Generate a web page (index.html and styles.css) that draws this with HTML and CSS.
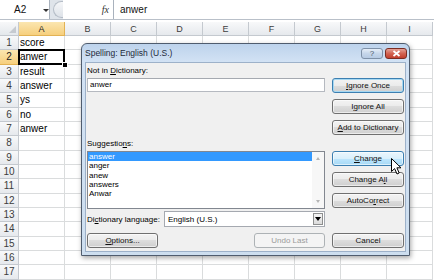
FILE: index.html
```html
<!DOCTYPE html>
<html lang="en">
<head>
  <meta charset="UTF-8" />
  <meta name="viewport" content="width=device-width, initial-scale=1.0"/>
  <title>Spelling: English (U.S.)</title>
  <link rel="stylesheet" href="styles.css">
</head>
<body>
  <!-- Formula bar -->
  <div class="formula-bar">
    <div class="name-box">A2<span class="name-caret"></span></div>
    <div class="grip"></div>
    <div class="fx-box"><span class="fx">fx</span></div>
    <div class="formula">anwer</div>
  </div>

  <!-- Sheet grid, filled by the script below -->
  <div class="sheet" id="sheet"></div>

  <!-- Spelling dialog -->
  <div class="dialog">
    <div class="title-bar">
      <span class="title">Spelling: English (U.S.)</span>
      <span class="tb-btn tb-help">?</span>
      <span class="tb-btn tb-close">
        <svg width="9" height="7" viewBox="0 0 9 7"><path d="M1.5 1 L7.5 6 M7.5 1 L1.5 6" stroke="#fff" stroke-width="1.8"/></svg>
      </span>
    </div>

    <div class="dialog-body">
      <div class="left-col">
        <div class="label first">Not in <u>D</u>ictionary:</div>
        <div class="textbox">anwer</div>

        <div class="label suggest">Suggestio<u>n</u>s:</div>
        <div class="listbox">
          <ul class="items">
            <li class="selected">answer</li>
            <li>anger</li>
            <li>anew</li>
            <li>answers</li>
            <li>Anwar</li>
          </ul>
          <div class="scrollbar">
            <span class="arrow-up"></span>
            <span class="arrow-down"></span>
          </div>
        </div>

        <div class="lang-row">
          <span class="lang-label">Di<u>c</u>tionary language:</span>
          <div class="select">
            <span>English (U.S.)</span>
            <span class="select-btn"><span class="arrow-down dark"></span></span>
          </div>
        </div>

        <div class="bottom-row">
          <div class="btn small"><u>O</u>ptions...</div>
          <div class="btn small disabled">Undo Last</div>
        </div>
      </div>

      <div class="right-col">
        <div class="btn default b-once"><u>I</u>gnore Once</div>
        <div class="btn b-gap">I<u>g</u>nore All</div>
        <div class="btn b-gap"><u>A</u>dd to Dictionary</div>
        <div class="btn hot b-change"><u>C</u>hange</div>
        <div class="btn b-gap">Change A<u>l</u>l</div>
        <div class="btn b-gap">AutoCo<u>r</u>rect</div>
        <div class="btn b-cancel">Cancel</div>
      </div>
    </div>
  </div>

  <svg class="cursor" width="12" height="18" viewBox="0 0 12 18">
    <path d="M0.5 0.5 V13.5 L3.6 10.6 L6 16 L8.2 15 L5.9 9.8 H10 Z" fill="#fff" stroke="#000" stroke-width="1" stroke-linejoin="round"/>
  </svg>

  <script>
    const cols = ['A', 'B', 'C', 'D', 'E', 'F', 'G', 'H', 'I'];
    const values = ['score', 'anwer', 'result', 'answer', 'ys', 'no', 'anwer'];
    const sheet = document.getElementById('sheet');

    function addCell(cls, text) {
      const div = document.createElement('div');
      div.className = cls;
      if (text) div.textContent = text;
      sheet.appendChild(div);
    }

    // Column headers
    addCell('corner');
    cols.forEach(c => addCell(c === 'A' ? 'col-head sel' : 'col-head', c));

    // Rows
    for (let r = 1; r <= 17; r++) {
      addCell(r === 2 ? 'row-head sel' : 'row-head', String(r));
      cols.forEach(c => {
        const text = c === 'A' ? values[r - 1] : '';
        addCell(c === 'A' && r === 2 ? 'cell active' : 'cell', text);
      });
    }
  </script>
</body>
</html>
```

FILE: styles.css
```css
body {
  margin: 0;
  width: 434px;
  height: 280px;
  overflow: hidden;
  position: relative;
  background: #fff;
  font-family: 'Liberation Sans', Arial, sans-serif;
}

/* Formula bar */
.formula-bar {
  height: 19px;
  display: flex;
  background: #dfe4ea;
  border-bottom: 1px solid #b9c0c9;
  margin-bottom: 2px;
}

.name-box {
  width: 50px;
  background: #fff;
  border-right: 1px solid #a9b2bd;
  font-size: 10px;
  line-height: 19px;
  padding-left: 14px;
  box-sizing: border-box;
  position: relative;
  color: #111;
}

.name-caret {
  position: absolute;
  left: 43px;
  top: 9px;
  border-left: 3px solid transparent;
  border-right: 3px solid transparent;
  border-top: 3px solid #333;
}

.grip {
  width: 9px;
  margin: 1px 0 1px 3px;
  background: linear-gradient(#f6f7f9, #dde2e8);
  border: 1px solid #b5bdc7;
  border-right: none;
  border-radius: 9px 0 0 9px;
}

.fx-box {
  width: 50px;
  background: #fff;
  display: flex;
  justify-content: flex-end;
  align-items: center;
  padding-right: 4px;
  box-sizing: border-box;
}

.fx {
  font-family: 'Liberation Serif', serif;
  font-style: italic;
  font-size: 10px;
  color: #333;
}

.formula {
  flex: 1;
  background: #fff;
  border-left: 1px solid #a9b2bd;
  font-size: 10px;
  line-height: 19px;
  padding-left: 6px;
  color: #111;
}

/* Sheet */
.sheet {
  display: grid;
  grid-template-columns: 19px repeat(9, 46px);
  grid-template-rows: 14px;
  grid-auto-rows: 14.34px;
}

.sheet > div {
  box-sizing: border-box;
  border-right: 1px solid #dadcdd;
  border-bottom: 1px solid #dadcdd;
}

.corner {
  background: linear-gradient(#f7f8f9, #e4e8ec);
  position: relative;
}

.corner::after {
  content: '';
  position: absolute;
  right: 2px;
  bottom: 2px;
  border-left: 7px solid transparent;
  border-bottom: 7px solid #c5cad0;
}

.col-head,
.row-head {
  background: linear-gradient(#f8f9fa, #e6e9ed);
  color: #3d3d3d;
  text-align: center;
}

.sheet > .col-head,
.sheet > .row-head,
.sheet > .corner {
  border-color: #c4c9cf;
}

.col-head {
  font-size: 9px;
  line-height: 14px;
}

.row-head {
  font-size: 10px;
  line-height: 14px;
}

.sel {
  background: linear-gradient(#fbe6b0, #f6cf7d);
  color: #222;
}

.sheet > .sel {
  border-color: #e2b254;
}

.cell {
  font-size: 10px;
  line-height: 14px;
  padding-left: 1px;
  color: #000;
}

.active {
  position: relative;
}

.active::before {
  content: '';
  position: absolute;
  left: -1px;
  top: -1px;
  right: -1px;
  bottom: -1px;
  border: 2px solid #000;
}

.active::after {
  content: '';
  position: absolute;
  right: -4px;
  bottom: -4px;
  width: 4px;
  height: 4px;
  background: #000;
  border: 1px solid #fff;
}

/* Dialog */
.dialog {
  position: absolute;
  left: 81px;
  top: 43px;
  width: 329px;
  height: 213px;
  box-sizing: border-box;
  border: 1px solid #4f5c6e;
  border-radius: 6px 6px 0 0;
  background: linear-gradient(#bdd3ec, #d2e2f4 18px, #cddeef);
  display: flex;
  flex-direction: column;
  font-size: 8px;
  color: #000;
  box-shadow: 1px 2px 5px rgba(0, 0, 0, 0.35);
}

.title-bar {
  height: 18px;
  display: flex;
  align-items: center;
  padding: 0 2px 0 3px;
}

.title {
  font-size: 8.5px;
  color: #1e2a3a;
}

.tb-btn {
  height: 11px;
  width: 22px;
  box-sizing: border-box;
  border-radius: 3px;
  display: flex;
  align-items: center;
  justify-content: center;
}

.tb-help {
  margin-left: auto;
  background: linear-gradient(#e6eef8, #c6d6ea 50%, #b7cbe3);
  border: 1px solid #7f91a8;
  color: #4a5668;
  font-size: 8px;
}

.tb-close {
  margin-left: 2px;
  background: linear-gradient(#e5a196, #d26352 50%, #c23f2d);
  border: 1px solid #7b2c22;
}

.dialog-body {
  flex: 1;
  margin: 0 3px 3px;
  background: #f0f0f0;
  border: 1px solid #9db1c9;
  display: flex;
  gap: 7px;
  padding-left: 1px;
}

.left-col {
  width: 238px;
  display: flex;
  flex-direction: column;
}

.right-col {
  width: 72px;
  display: flex;
  flex-direction: column;
}

.label {
  line-height: 10px;
  height: 10px;
}

.label.first {
  margin-top: 3px;
}

.label.suggest {
  margin-top: 47px;
}

.textbox {
  margin-top: 2px;
  height: 14px;
  box-sizing: border-box;
  background: #fff;
  border: 1px solid #b5b9c0;
  border-top-color: #a5a9b0;
  line-height: 12px;
  padding-left: 2px;
}

.listbox {
  margin-top: 2px;
  height: 58px;
  box-sizing: border-box;
  border: 1px solid #828790;
  background: #fff;
  display: flex;
}

.items {
  list-style: none;
  margin: 0;
  padding: 0;
  flex: 1;
}

.items li {
  height: 9.3px;
  line-height: 9.3px;
  padding-left: 1px;
}

.items li.selected {
  background: #3399ff;
  color: #fff;
}

.scrollbar {
  width: 12px;
  background: #f7f7f7;
  display: flex;
  flex-direction: column;
  justify-content: space-between;
  align-items: center;
  padding: 5px 0;
  box-sizing: border-box;
}

.arrow-up {
  border-left: 2.5px solid transparent;
  border-right: 2.5px solid transparent;
  border-bottom: 3px solid #b5b5b5;
}

.arrow-down {
  border-left: 2.5px solid transparent;
  border-right: 2.5px solid transparent;
  border-top: 3px solid #b5b5b5;
}

.arrow-down.dark {
  border-left-width: 3px;
  border-right-width: 3px;
  border-top: 4px solid #000;
}

.lang-row {
  margin-top: 2px;
  height: 16px;
  display: flex;
  align-items: center;
}

.lang-label {
  width: 77px;
}

.select {
  flex: 1;
  height: 16px;
  box-sizing: border-box;
  background: #fff;
  border: 1px solid #a5a9b0;
  display: flex;
  align-items: center;
  padding: 0 1px 0 3px;
}

.select-btn {
  margin-left: auto;
  width: 10px;
  height: 12px;
  box-sizing: border-box;
  border: 1px solid #8e8f8f;
  background: linear-gradient(#f4f4f4, #dcdcdc);
  display: flex;
  align-items: center;
  justify-content: center;
}

.bottom-row {
  margin-top: 6px;
  display: flex;
  justify-content: space-between;
}

/* Buttons */
.btn {
  height: 15px;
  box-sizing: border-box;
  border: 1px solid #707070;
  border-radius: 3px;
  background: linear-gradient(#f3f3f3, #ebebeb 50%, #dddddd 50%, #cfcfcf);
  box-shadow: inset 0 0 0 1px rgba(255, 255, 255, 0.6);
  display: flex;
  align-items: center;
  justify-content: center;
  color: #111;
}

.btn.small {
  width: 71px;
}

.btn.default {
  border-color: #3c7fb1;
  box-shadow: inset 0 0 0 1px #a6d8f2;
}

.btn.hot {
  border-color: #3c7fb1;
  background: linear-gradient(#eaf6fd, #d9f0fc 50%, #bee6fd 50%, #a7d9f5);
}

.btn.disabled {
  border-color: #adb2b5;
  background: #f4f4f4;
  color: #9a9a9a;
  box-shadow: none;
}

.b-once {
  margin-top: 15px;
}

.b-gap {
  margin-top: 6px;
}

.b-change {
  margin-top: 16px;
}

.b-cancel {
  margin-top: 25px;
}

.cursor {
  position: absolute;
  left: 391px;
  top: 158px;
}
```
